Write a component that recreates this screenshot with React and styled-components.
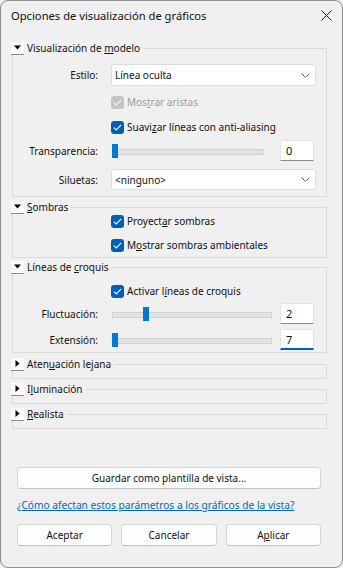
import React from 'react';
import styled, { createGlobalStyle } from 'styled-components';

const GlobalStyle = createGlobalStyle`
  html, body { margin: 0; padding: 0; background: #f0f0f0; }
  body { font-family: "Noto Sans", "Liberation Sans", sans-serif; }
  * { box-sizing: border-box; }
`;

const Window = styled.div`
  width: 343px;
  height: 568px;
  border: 1px solid #8f8f8f;
  border-radius: 8px;
  background: #f0f0f0;
  display: flex;
  flex-direction: column;
  overflow: hidden;
  font-size: 10px;
  color: #111;
`;

const TitleBar = styled.div`
  height: 29px;
  flex: none;
  display: flex;
  align-items: center;
  justify-content: space-between;
  padding: 0 10px 0 10px;
  font-size: 11.2px;
  color: #111;
`;

const Content = styled.div`
  padding: 11px 15px 0 11px;
  display: flex;
  flex-direction: column;
`;

const Group = styled.fieldset`
  margin: ${p => p.$mt || 0}px 0 0;
  padding: 0 10px ${p => p.$pb}px 0;
  border: 1px solid #dadada;
  min-width: 0;
`;

const Legend = styled.legend`
  display: flex;
  align-items: center;
  gap: 3px;
  height: 14px;
  line-height: 14px;
  padding: 0 3px 0 0;
  margin-left: -2px;
`;

const Expander = styled.span`
  width: 13px;
  height: 13px;
  flex: none;
  background: #fbfbfb;
  border-bottom: 1px solid #8c8c8c;
  display: flex;
  align-items: center;
  justify-content: center;
`;

const Row = styled.div`
  display: flex;
  align-items: center;
  height: ${p => p.$h}px;
  margin-top: ${p => p.$mt || 0}px;
  padding-left: ${p => (p.$indent ? 98 : 0)}px;
`;

const Label = styled.span`
  width: 85px;
  flex: none;
  margin-right: 13px;
  text-align: right;
  white-space: nowrap;
`;

const Select = styled.div`
  flex: 1;
  height: 100%;
  background: #fff;
  border: 1px solid #dcdcdc;
  border-radius: 3px;
  display: flex;
  align-items: center;
  justify-content: space-between;
  padding: 0 5px 0 3px;
`;

const Box = styled.span`
  width: 13px;
  height: 13px;
  flex: none;
  border-radius: 3px;
  background: ${p => (p.$disabled ? '#c5c5c5' : '#005fb8')};
  display: flex;
  align-items: center;
  justify-content: center;
`;

const CheckText = styled.span`
  margin-left: 3px;
  color: ${p => (p.$disabled ? '#9d9d9d' : '#111')};
  white-space: nowrap;
`;

const Track = styled.div`
  position: relative;
  flex: 1;
  height: 14px;
  margin: 0 ${p => p.$gap}px 0 1px;
  &::before {
    content: '';
    position: absolute;
    left: 0;
    right: 0;
    top: 5px;
    height: 4px;
    background: #e3e3e3;
    border: 1px solid #d0d0d0;
  }
`;

const Thumb = styled.span`
  position: absolute;
  top: 0;
  width: 6px;
  height: 14px;
  background: #0078d4;
`;

const NumberBox = styled.div`
  width: 34px;
  height: 100%;
  flex: none;
  margin-right: 2px;
  background: #fff;
  border: 1px solid #e4e4e4;
  border-bottom: ${p => (p.$focus ? '2px solid #005fb8' : '1px solid #8a8a8a')};
  border-radius: 2px 2px 0 0;
  padding-left: 5px;
  display: flex;
  align-items: center;
  font-size: 11px;
`;

const Footer = styled.div`
  margin-top: auto;
  padding: 0 21px 21px 16px;
  display: flex;
  flex-direction: column;
`;

const Button = styled.button`
  height: 22px;
  font: inherit;
  font-size: 10px;
  color: #111;
  background: #fdfdfd;
  border: 1px solid #d5d5d5;
  border-bottom-color: #c2c2c2;
  border-radius: 4px;
  padding: 0;
`;

const Link = styled.a`
  margin-top: 9px;
  line-height: 14px;
  font-size: 10.2px;
  color: #0067c0;
  text-decoration: underline;
  white-space: nowrap;
`;

const ButtonRow = styled.div`
  margin-top: 12px;
  display: grid;
  grid-template-columns: repeat(3, 1fr);
  gap: 9px;
`;

const Chevron = () => (
  <svg width="9" height="5" viewBox="0 0 9 5">
    <path d="M0.5 0.5 L4.5 4.5 L8.5 0.5" fill="none" stroke="#606060" strokeWidth="1" />
  </svg>
);

const Tri = ({ open }) => (
  <svg width="7" height="7" viewBox="0 0 7 7">
    {open ? <polygon points="0,1.5 7,1.5 3.5,5.5" fill="#000" /> : <polygon points="1.5,0 5.5,3.5 1.5,7" fill="#000" />}
  </svg>
);

const Check = ({ disabled, children }) => (
  <>
    <Box $disabled={disabled}>
      <svg width="9" height="7" viewBox="0 0 9 7">
        <path d="M0.8 3.6 L3.3 6 L8.2 0.9" fill="none" stroke={disabled ? '#f4f4f4' : '#fff'} strokeWidth="1.1" />
      </svg>
    </Box>
    <CheckText $disabled={disabled}>{children}</CheckText>
  </>
);

const Section = ({ title, open, mt, pb, children }) => (
  <Group $mt={mt} $pb={pb}>
    <Legend>
      <Expander><Tri open={open} /></Expander>
      <span>{title}</span>
    </Legend>
    {children}
  </Group>
);

const Slider = ({ pos, gap }) => (
  <Track $gap={gap}>
    <Thumb style={{ left: pos }} />
  </Track>
);

export default function App() {
  return (
    <Window>
      <GlobalStyle />
      <TitleBar>
        <span>Opciones de visualización de gráficos</span>
        <svg width="11" height="11" viewBox="0 0 11 11">
          <path d="M0.5 0.5 L10.5 10.5 M10.5 0.5 L0.5 10.5" stroke="#1a1a1a" strokeWidth="1" />
        </svg>
      </TitleBar>
      <Content>
        <Section title={<>Visualización de <u>m</u>odelo</>} open pb={6}>
          <Row $h={22} $mt={9}>
            <Label>Estilo:</Label>
            <Select><span>Línea oculta</span><Chevron /></Select>
          </Row>
          <Row $h={14} $mt={9} $indent>
            <Check disabled>Mos<u>t</u>rar aristas</Check>
          </Row>
          <Row $h={14} $mt={11} $indent>
            <Check>Suavi<u>z</u>ar líneas con anti-aliasing</Check>
          </Row>
          <Row $h={21} $mt={6}>
            <Label>Transparencia:</Label>
            <Slider pos={0} gap={16} />
            <NumberBox>0</NumberBox>
          </Row>
          <Row $h={21} $mt={8}>
            <Label>Siluetas:</Label>
            <Select><span>&lt;ninguno&gt;</span><Chevron /></Select>
          </Row>
        </Section>

        <Section title={<><u>S</u>ombras</>} open mt={3} pb={5}>
          <Row $h={14} $indent>
            <Check>Proyect<u>a</u>r sombras</Check>
          </Row>
          <Row $h={14} $mt={10} $indent>
            <Check>M<u>o</u>strar sombras ambientales</Check>
          </Row>
        </Section>

        <Section title={<>Líneas de <u>c</u>roquis</>} open mt={2} pb={2}>
          <Row $h={14} $mt={10} $indent>
            <Check>Activar l<u>í</u>neas de croquis</Check>
          </Row>
          <Row $h={21} $mt={5}>
            <Label>Fluctuación:</Label>
            <Slider pos={31} gap={8} />
            <NumberBox>2</NumberBox>
          </Row>
          <Row $h={21} $mt={5}>
            <Label>Extensión:</Label>
            <Slider pos={0} gap={8} />
            <NumberBox $focus>7</NumberBox>
          </Row>
        </Section>

        <Section title={<>Aten<u>u</u>ación lejana</>} mt={4} pb={7} />
        <Section title={<>I<u>l</u>uminación</>} mt={3} pb={7} />
        <Section title={<><u>R</u>ealista</>} mt={3} pb={7} />
      </Content>

      <Footer>
        <Button>Guardar como plantilla de vista...</Button>
        <Link>¿Cómo afectan estos parámetros a los gráficos de la vista?</Link>
        <ButtonRow>
          <Button>Aceptar</Button>
          <Button>Cancelar</Button>
          <Button>A<u>p</u>licar</Button>
        </ButtonRow>
      </Footer>
    </Window>
  );
}
